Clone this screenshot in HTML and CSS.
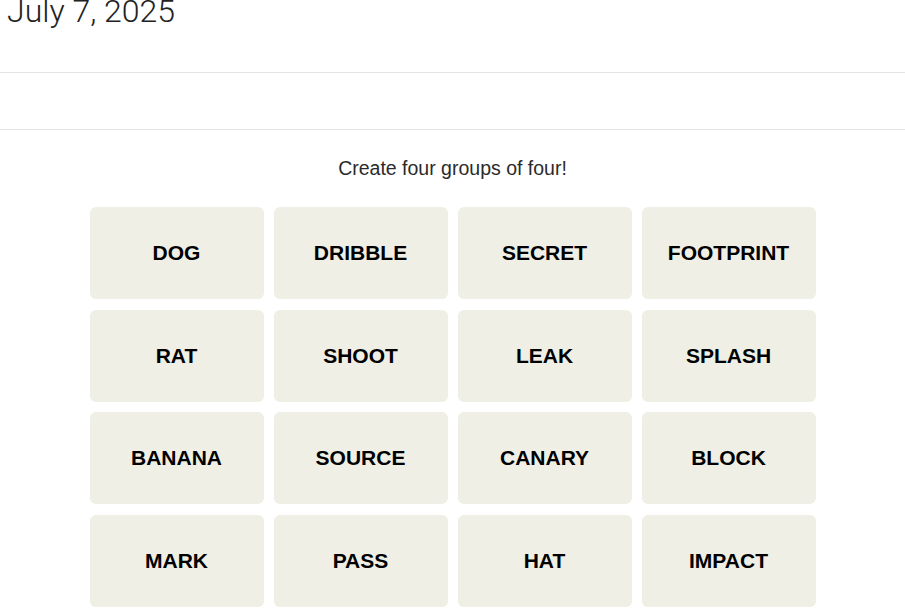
FILE: index.html
```html
<!DOCTYPE html>
<html lang="en">
<head>
  <meta charset="UTF-8">
  <meta name="viewport" content="width=device-width, initial-scale=1.0">
  <title>Connections</title>
  <link rel="stylesheet" href="styles.css">
</head>
<body>
  <div class="date">July 7, 2025</div>
  <div class="toolbar"></div>

  <p class="prompt">Create four groups of four!</p>

  <!-- Puzzle board -->
  <div class="board">
    <button class="tile">DOG</button>
    <button class="tile">DRIBBLE</button>
    <button class="tile">SECRET</button>
    <button class="tile">FOOTPRINT</button>
    <button class="tile">RAT</button>
    <button class="tile">SHOOT</button>
    <button class="tile">LEAK</button>
    <button class="tile">SPLASH</button>
    <button class="tile">BANANA</button>
    <button class="tile">SOURCE</button>
    <button class="tile">CANARY</button>
    <button class="tile">BLOCK</button>
    <button class="tile">MARK</button>
    <button class="tile">PASS</button>
    <button class="tile">HAT</button>
    <button class="tile">IMPACT</button>
  </div>
</body>
</html>
```

FILE: styles.css
```css
/* General Styles */
body {
  margin: 0;
  padding: 0;
  background: #fff;
  color: #222;
  font-family: 'Liberation Sans', Arial, sans-serif;
}

.date {
  font-family: 'Roboto', 'Liberation Sans', sans-serif;
  font-weight: 300;
  font-size: 32px;
  line-height: 30px;
  color: #222;
  margin-top: -4px;
  padding-left: 7px;
  height: 76px;
}

.toolbar {
  height: 56px;
  border-top: 1px solid #e4e4e4;
  border-bottom: 1px solid #e4e4e4;
}

.prompt {
  text-align: center;
  font-size: 19.5px;
  line-height: 24px;
  color: #2b2b2b;
  margin: 26px 0 27px;
}

/* Board */
.board {
  display: grid;
  grid-template-columns: repeat(4, 174px);
  grid-auto-rows: 92px;
  column-gap: 10px;
  row-gap: 10.5px;
  justify-content: center;
}

.tile {
  border: none;
  border-radius: 6px;
  background: #efefe6;
  color: #000;
  font-family: 'Liberation Sans', Arial, sans-serif;
  font-weight: bold;
  font-size: 21px;
  padding: 0;
  cursor: pointer;
}
```
